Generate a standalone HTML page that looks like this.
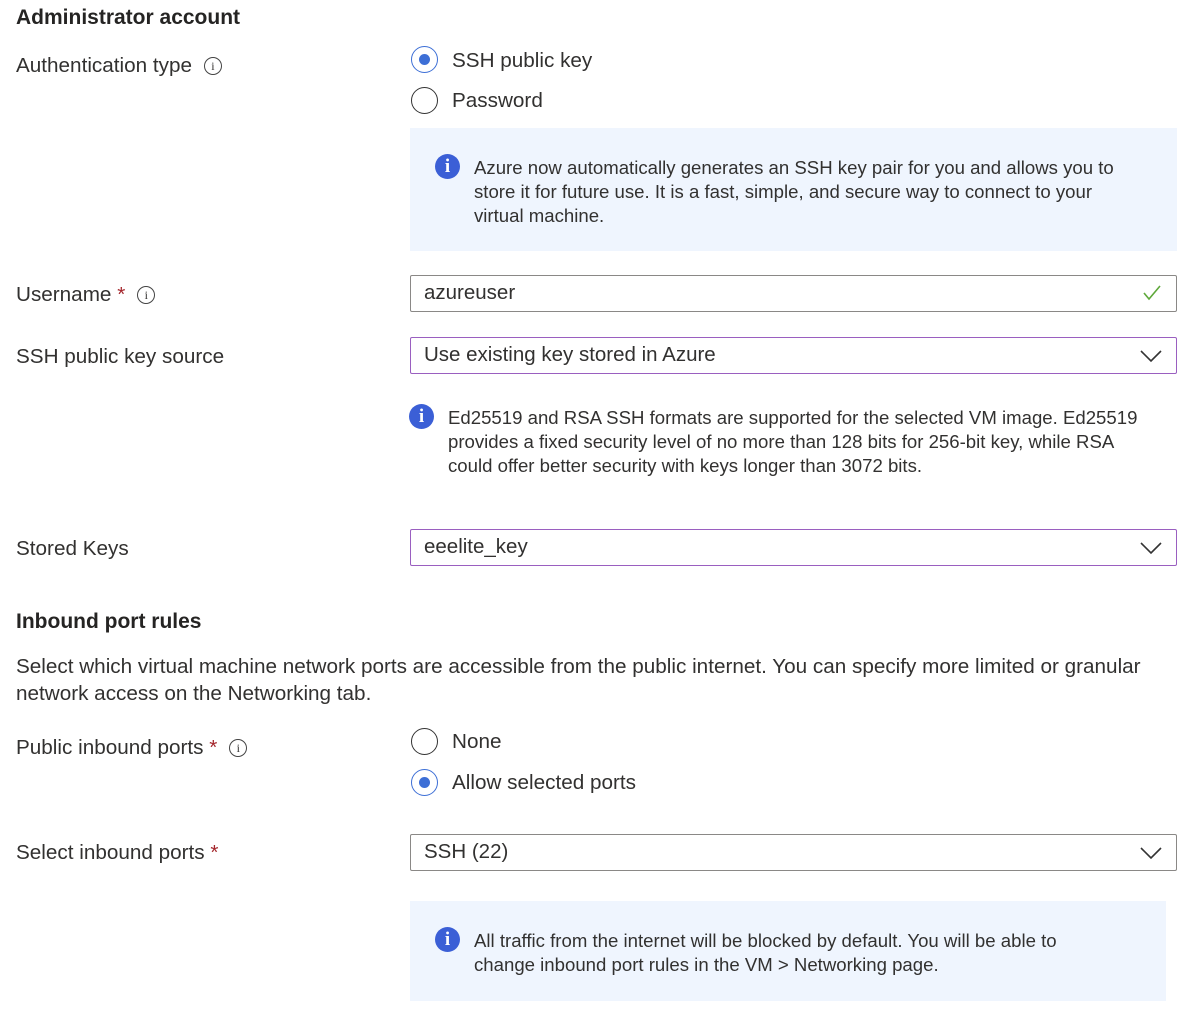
<!DOCTYPE html>
<html><head><meta charset="utf-8"><style>
body{margin:0;width:1202px;height:1018px;background:#fff;font-family:"Liberation Sans",sans-serif;color:#323130;position:relative;overflow:hidden}
.a{position:absolute;white-space:nowrap}
.l{font-size:20.7px}
.h{font-size:21px;font-weight:bold;color:#252423}
.req{color:#a4262c}
.ii{display:inline-block;width:16px;height:16px;border:1.3px solid #444;border-radius:50%;font-size:12px;line-height:16px;text-align:center;font-family:"Liberation Serif",serif;vertical-align:2px;margin-left:12px}
.rad{position:absolute;width:27px;height:27px;border:1.5px solid #333;border-radius:50%;box-sizing:border-box}
.rad.on{border-color:#3d6fd6}
.rad.on::after{content:"";position:absolute;left:6.5px;top:6.5px;width:11px;height:11px;border-radius:50%;background:#3d6fd6}
.box{position:absolute;left:410px;width:767px;height:37px;box-sizing:border-box;border:1.5px solid #8a8886;border-radius:2px;font-size:20.5px;line-height:34px;padding-left:13px}
.box.p{border-color:#9a5fc0}
.chev{position:absolute;right:14px;top:12px}
.info{position:absolute;background:#eff5fe;}
.bi{position:absolute;width:25px;height:25px;border-radius:50%;background:#3b5fd6;color:#fff;font-weight:bold;font-size:19px;line-height:25px;text-align:center;font-family:"Liberation Serif",serif}
.t{font-size:18.6px;line-height:24px}
</style></head><body>
<div class="a h" style="left:16px;top:6px">Administrator account</div>
<div class="a l" style="left:16px;top:54px">Authentication type<span class="ii">i</span></div>
<div class="rad on" style="left:411px;top:46px"></div>
<div class="a l" style="left:452px;top:49px">SSH public key</div>
<div class="rad" style="left:411px;top:87px"></div>
<div class="a l" style="left:452px;top:89px">Password</div>
<div class="info" style="left:410px;top:128px;width:767px;height:123px"></div>
<div class="bi" style="left:435px;top:154px">i</div>
<div class="a t" style="left:474px;top:156px">Azure now automatically generates an SSH key pair for you and allows you to<br>store it for future use. It is a fast, simple, and secure way to connect to your<br>virtual machine.</div>
<div class="a l" style="left:16px;top:283px">Username <span class="req">*</span><span class="ii">i</span></div>
<div class="box" style="top:275px">azureuser<svg class="chev" style="top:8px" width="20" height="18" viewBox="0 0 20 18"><path d="M2 9l5 6L18 2" fill="none" stroke="#5ea83a" stroke-width="1.6"/></svg></div>
<div class="a l" style="left:16px;top:345px">SSH public key source</div>
<div class="box p" style="top:337px">Use existing key stored in Azure<svg class="chev" width="22" height="13" viewBox="0 0 22 13"><path d="M1 1l10 10L21 1" fill="none" stroke="#333" stroke-width="1.6"/></svg></div>
<div class="bi" style="left:409px;top:404px">i</div>
<div class="a t" style="left:448px;top:406px">Ed25519 and RSA SSH formats are supported for the selected VM image. Ed25519<br>provides a fixed security level of no more than 128 bits for 256-bit key, while RSA<br>could offer better security with keys longer than 3072 bits.</div>
<div class="a l" style="left:16px;top:537px">Stored Keys</div>
<div class="box p" style="top:529px">eeelite_key<svg class="chev" width="22" height="13" viewBox="0 0 22 13"><path d="M1 1l10 10L21 1" fill="none" stroke="#333" stroke-width="1.6"/></svg></div>
<div class="a h" style="left:16px;top:610px">Inbound port rules</div>
<div class="a l" style="left:16px;top:653px;line-height:27px">Select which virtual machine network ports are accessible from the public internet. You can specify more limited or granular<br>network access on the Networking tab.</div>
<div class="a l" style="left:16px;top:736px">Public inbound ports <span class="req">*</span><span class="ii">i</span></div>
<div class="rad" style="left:411px;top:728px"></div>
<div class="a l" style="left:452px;top:730px">None</div>
<div class="rad on" style="left:411px;top:769px"></div>
<div class="a l" style="left:452px;top:771px">Allow selected ports</div>
<div class="a l" style="left:16px;top:841px">Select inbound ports <span class="req">*</span></div>
<div class="box" style="top:834px">SSH (22)<svg class="chev" width="22" height="13" viewBox="0 0 22 13"><path d="M1 1l10 10L21 1" fill="none" stroke="#333" stroke-width="1.6"/></svg></div>
<div class="info" style="left:410px;top:901px;width:756px;height:100px"></div>
<div class="bi" style="left:435px;top:927px">i</div>
<div class="a t" style="left:474px;top:929px">All traffic from the internet will be blocked by default. You will be able to<br>change inbound port rules in the VM &gt; Networking page.</div>
</body></html>
